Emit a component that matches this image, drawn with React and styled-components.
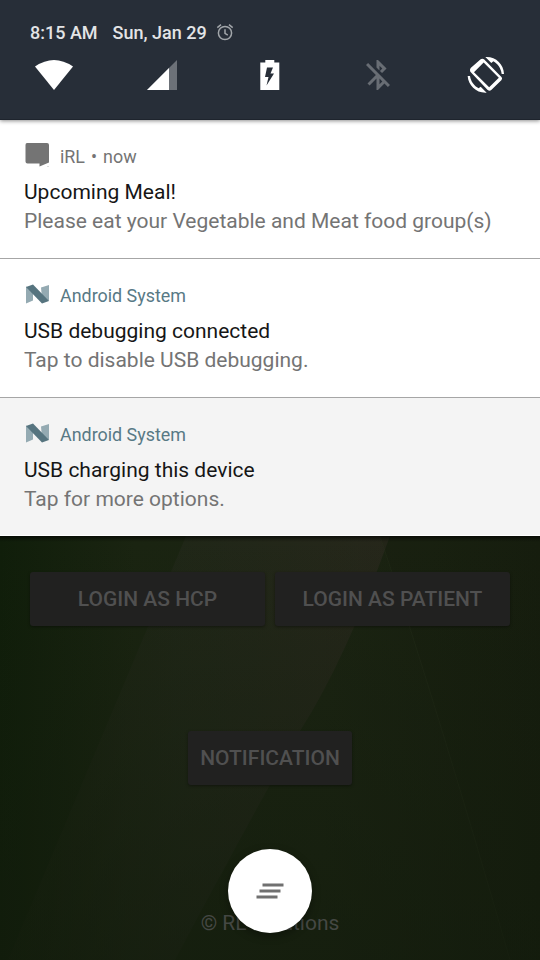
import React from "react";
import styled, { createGlobalStyle } from "styled-components";

const GlobalStyle = createGlobalStyle`
  * { box-sizing: border-box; }
  body { margin: 0; background: #18200f; font-family: Roboto, "Liberation Sans", sans-serif; }
`;

const Screen = styled.div`
  position: relative;
  display: flex;
  flex-direction: column;
  width: 540px;
  height: 960px;
  overflow: hidden;
  background: #18210f;
`;

const Header = styled.header`
  position: relative;
  z-index: 2;
  flex: none;
  height: 120px;
  padding-top: 20px;
  background: #272e38;
  border-bottom: 1px solid #1e242d;
  box-shadow: 0 1px 4px rgba(0, 0, 0, 0.45);
`;

const StatusLine = styled.div`
  display: flex;
  align-items: center;
  height: 25px;
  padding-left: 30px;
  color: #e3e4e6;
  font-size: 18px;
  font-weight: 500;
  white-space: pre;
`;

const DateText = styled.span`
  margin-left: 15px;
  margin-right: 9px;
`;

const Toggles = styled.div`
  display: flex;
  justify-content: space-between;
  padding: 0 24px;
`;

const Toggle = styled.div`
  display: flex;
  justify-content: center;
  width: 60px;
  height: 60px;
`;

const Notification = styled.section`
  position: relative;
  z-index: 1;
  flex: none;
  height: ${(p) => (p.$last ? 138 : 139)}px;
  padding: 21px 24px 0;
  background: ${(p) => (p.$muted ? "#f4f4f4" : "#fff")};
  border-bottom: ${(p) => (p.$last ? "1px solid #fff" : "1px solid #a8a8a8")};
  box-shadow: 0 1px 2px rgba(0, 0, 0, 0.2);
`;

const AppLine = styled.div`
  display: flex;
  align-items: center;
  gap: 9px;
  height: 29px;
  color: ${(p) => p.$color};
  font-size: 17.9px;
  word-spacing: ${(p) => (p.$dotted ? 1.6 : 0)}px;
`;

const AppName = styled.span`
  padding-top: 1px;
`;

const AppIcon = styled.svg`
  flex: none;
  width: 27px;
  height: 30px;
`;

const Title = styled.div`
  height: 29px;
  margin-top: 7px;
  line-height: 30px;
  font-size: 21px;
  color: #161616;
  white-space: nowrap;
`;

const Body = styled.div`
  height: 30px;
  line-height: 30px;
  font-size: 21px;
  color: #747474;
  white-space: nowrap;
`;

const AppPage = styled.main`
  position: relative;
  flex: 1;
  display: flex;
  flex-direction: column;
  align-items: center;
  padding-top: 36px;
`;

const Wallpaper = styled.svg`
  position: absolute;
  inset: 0;
  width: 540px;
  height: 424px;
`;

const ButtonRow = styled.div`
  position: relative;
  display: flex;
  gap: 10px;
`;

const PageButton = styled.button`
  width: ${(p) => p.$width}px;
  height: 54px;
  padding: 0;
  border: 0;
  border-radius: 3px;
  background: #212120;
  box-shadow: 0 1px 3px rgba(0, 0, 0, 0.4);
  color: #505050;
  font: 500 21px Roboto, sans-serif;
`;

const SecondRow = styled(ButtonRow)`
  margin-top: 105px;
`;

const Footer = styled.footer`
  position: relative;
  margin-top: 122px;
  height: 32px;
  line-height: 32px;
  font-size: 21px;
  color: #454844;
  white-space: nowrap;
`;

const ClearButton = styled.button`
  position: absolute;
  left: 228px;
  bottom: 27px;
  width: 84px;
  height: 84px;
  padding: 0;
  border: 0;
  border-radius: 50%;
  background: #fff;
  box-shadow: 0 3px 8px rgba(0, 0, 0, 0.35);
`;

const AlarmIcon = () => (
  <svg width="18" height="18" viewBox="0 0 18 18" fill="none" stroke="#a2a6aa" strokeWidth="1.5">
    <circle cx="9" cy="9" r="6.6" />
    <path d="M9 5.2v4.2l2.8 1.7M1.3 3.6 5 .7M16.7 3.6 13 .7" />
  </svg>
);

const WifiIcon = () => (
  <svg width="60" height="60" viewBox="0 0 60 60">
    <path d="M11 21.5Q30 8.5 49 21.5L30 45Z" fill="#fff" />
  </svg>
);

const SignalIcon = () => (
  <svg width="60" height="60" viewBox="0 0 60 60">
    <path d="M15 45H45V15Z" fill="#6c7178" />
    <path d="M15 45H37V23Z" fill="#fff" />
  </svg>
);

const BatteryIcon = () => (
  <svg width="60" height="60" viewBox="0 0 60 60">
    <path d="M20.3 17.5H25.3V15H34.3V17.5H39.3V45H20.3Z" fill="#fff" />
    <path d="M27 22.5H33L30.5 28.5H34L26.5 40.5L28.5 32H25Z" fill="#272e38" />
  </svg>
);

const BluetoothOffIcon = () => (
  <svg width="60" height="60" viewBox="0 0 60 60">
    <path
      transform="translate(12 12) scale(1.5)"
      fill="#686d74"
      d="M13 5.83l1.88 1.88-1.6 1.6 1.41 1.41 3.02-3.02L12 2h-1v5.03l2 2v-3.2zM5.41 4L4 5.41 10.59 12 5 17.59 6.41 19 11 14.41V22h1l4.29-4.29 2.3 2.29L20 18.59 5.41 4zM13 18.17v-3.76l1.88 1.88L13 18.17z"
    />
  </svg>
);

const RotateIcon = () => (
  <svg width="60" height="60" viewBox="0 0 180 180">
    <g fill="#fff" fillRule="evenodd" transform="translate(-3 0)">
      <path d="M47 69 77 43Q82 39 87 43L140 97Q143 102 139 106L108 136Q103 139 98 135L46 80Q43 74 47 69ZM57 81.5 102.5 127 131.5 98 86 52.5Z" />
      <path d="M91 36C122 34 146 57 147 87H140C138 70 128 56 115 49L109 54Z" />
      <path d="M95 143C64 145 40 122 38 93H45C47 109 58 123 71 130L77 125Z" />
    </g>
  </svg>
);

const MessageIcon = () => (
  <AppIcon viewBox="0 0 27 30">
    <path d="M3 2H23Q25 2 25 4V21.5L15.5 25.5V22.5H3.5Q1.5 22.5 1.5 20.5V4Q1.5 2 3 2Z" fill="#747474" />
    <circle cx="24" cy="25.5" r=".6" fill="#b4b4b4" />
  </AppIcon>
);

const NougatIcon = () => (
  <AppIcon viewBox="0 0 27 30">
    <path d="M2 6.5 9 9.5V20.5L2 23.5Z" fill="#94aab2" />
    <path d="M17 7.5 25 5V21L18 18Z" fill="#94aab2" />
    <path d="M2 7 9 4.5 25 21 18 23.5Z" fill="#56747f" />
  </AppIcon>
);

const ClearAllIcon = () => (
  <svg width="84" height="84" viewBox="0 0 84 84" fill="#707070">
    <path d="M34.5 34.5H55.5V37.5H34.5ZM31.5 40.5H52.5V43.5H31.5ZM28.5 46.5H49.5V49.5H28.5Z" />
  </svg>
);

const toggles = [WifiIcon, SignalIcon, BatteryIcon, BluetoothOffIcon, RotateIcon];

const notifications = [
  { app: "iRL • now", icon: MessageIcon, color: "#747474", title: "Upcoming Meal!", body: "Please eat your Vegetable and Meat food group(s)", dotted: true },
  { app: "Android System", icon: NougatIcon, color: "#587985", title: "USB debugging connected", body: "Tap to disable USB debugging." },
  { app: "Android System", icon: NougatIcon, color: "#587985", title: "USB charging this device", body: "Tap for more options.", muted: true },
];

const Backdrop = () => (
  <Wallpaper viewBox="0 0 540 424" preserveAspectRatio="none">
    <defs>
      <linearGradient id="base" x1="0" x2="1" y1="0" y2="0">
        <stop offset="0" stopColor="#101e0a" />
        <stop offset=".25" stopColor="#1a2411" />
        <stop offset=".6" stopColor="#1b2412" />
        <stop offset="1" stopColor="#171e0f" />
      </linearGradient>
      <linearGradient id="beam" x1="0" x2="1" y1="0" y2="0">
        <stop offset="0" stopColor="#1b2311" stopOpacity=".3" />
        <stop offset=".45" stopColor="#22281a" stopOpacity=".7" />
        <stop offset="1" stopColor="#29281d" stopOpacity=".8" />
      </linearGradient>
      <linearGradient id="fade" x1="0" x2="0" y1="0" y2="1">
        <stop offset="0" stopColor="#121b0c" stopOpacity="0" />
        <stop offset="1" stopColor="#121b0c" stopOpacity=".6" />
      </linearGradient>
      <linearGradient id="edge" x1="0" x2="0" y1="0" y2="1">
        <stop offset="0" stopColor="#000" stopOpacity=".5" />
        <stop offset="1" stopColor="#000" stopOpacity="0" />
      </linearGradient>
    </defs>
    <path d="M0 0H540V424H0Z" fill="url(#base)" />
    <path d="M186 0H390Q345 125 300 195Q230 320 175 424H8Q100 205 186 0Z" fill="url(#beam)" />
    <path d="M380 0Q440 180 510 424H540V0Z" fill="#11180b" fillOpacity=".15" />
    <path d="M380 0Q440 180 510 424" fill="none" stroke="#2a3320" strokeOpacity=".35" />
    <path d="M0 0H540V424H0Z" fill="url(#fade)" />
    <path d="M0 0H540V6H0Z" fill="url(#edge)" />
  </Wallpaper>
);

export default function App() {
  return (
    <>
      <GlobalStyle />
      <Screen>
        <Header>
          <StatusLine>
            <span>8:15 AM</span>
            <DateText>Sun, Jan 29</DateText>
            <AlarmIcon />
          </StatusLine>
          <Toggles>
            {toggles.map((Icon, i) => (
              <Toggle key={i}>
                <Icon />
              </Toggle>
            ))}
          </Toggles>
        </Header>
        {notifications.map(({ app, icon: Icon, color, title, body, muted, dotted }) => (
          <Notification key={title} $muted={muted} $last={muted}>
            <AppLine $color={color} $dotted={dotted}>
              <Icon />
              <AppName>{app}</AppName>
            </AppLine>
            <Title>{title}</Title>
            <Body>{body}</Body>
          </Notification>
        ))}
        <AppPage>
          <Backdrop />
          <ButtonRow>
            <PageButton $width={235}>LOGIN AS HCP</PageButton>
            <PageButton $width={235}>LOGIN AS PATIENT</PageButton>
          </ButtonRow>
          <SecondRow>
            <PageButton $width={164}>NOTIFICATION</PageButton>
          </SecondRow>
          <Footer>© RL Solutions</Footer>
          <ClearButton aria-label="Clear all">
            <ClearAllIcon />
          </ClearButton>
        </AppPage>
      </Screen>
    </>
  );
}
